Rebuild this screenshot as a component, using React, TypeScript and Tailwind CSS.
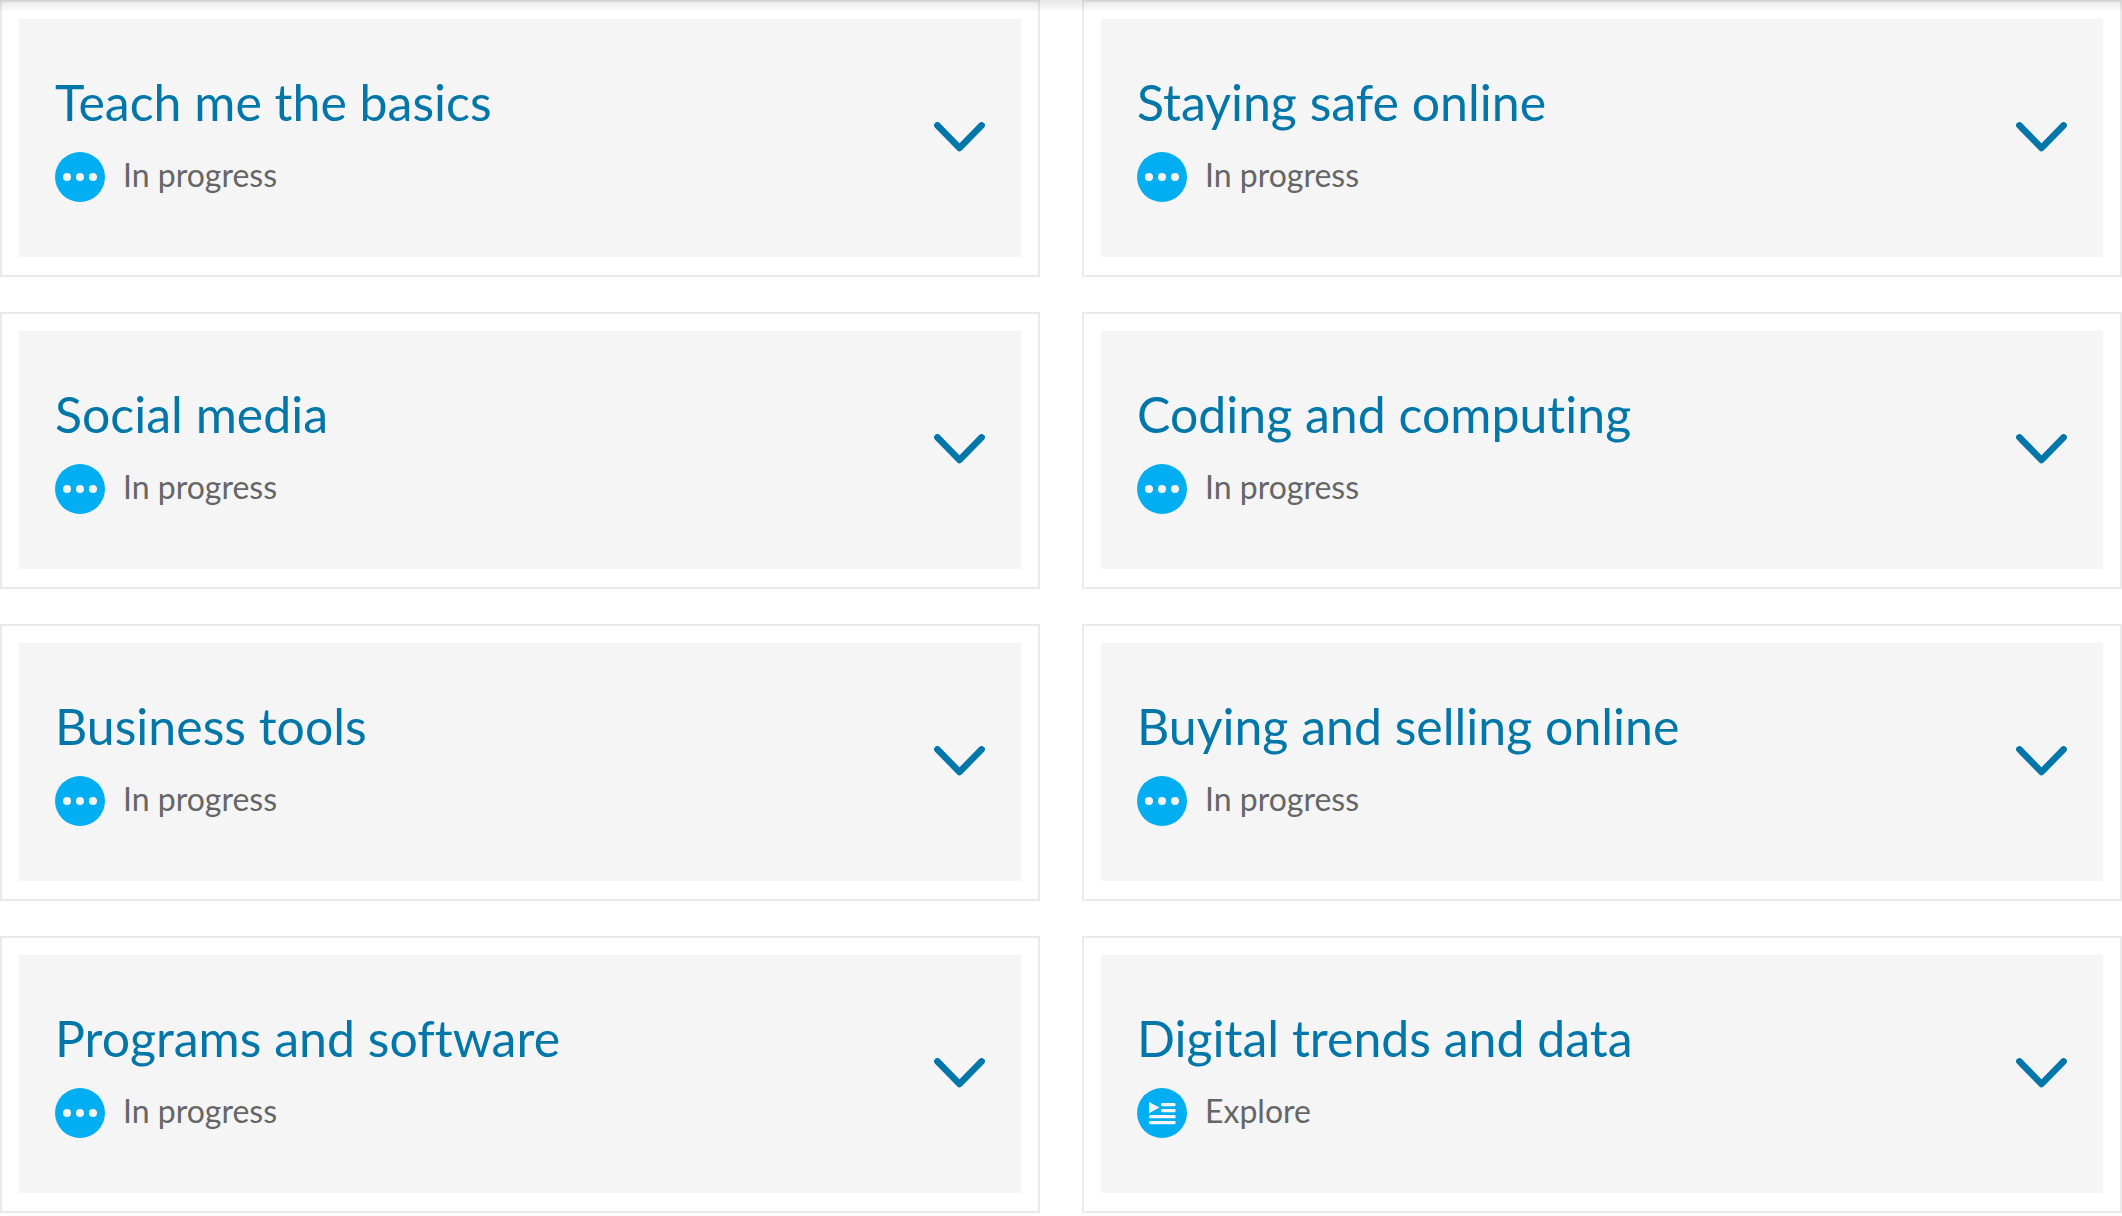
type Status = "In progress" | "Explore";

const topics: { title: string; status: Status }[] = [
  { title: "Teach me the basics", status: "In progress" },
  { title: "Staying safe online", status: "In progress" },
  { title: "Social media", status: "In progress" },
  { title: "Coding and computing", status: "In progress" },
  { title: "Business tools", status: "In progress" },
  { title: "Buying and selling online", status: "In progress" },
  { title: "Programs and software", status: "In progress" },
  { title: "Digital trends and data", status: "Explore" },
];

function StatusIcon({ status }: { status: Status }) {
  return (
    <svg viewBox="0 0 50 50" className="size-[50px] shrink-0" aria-hidden="true">
      <circle cx="25" cy="25" r="25" fill="#02aef2" />
      {status === "In progress" ? (
        <g fill="#f5f5f5">
          <circle cx="12" cy="25" r="4" />
          <circle cx="25" cy="25" r="4" />
          <circle cx="38" cy="25" r="4" />
        </g>
      ) : (
        <g fill="#f5f5f5">
          <path d="M12 14 L22.5 19.6 L12 25.2 Z" />
          <rect x="24" y="15" width="14.6" height="3.2" rx="1.2" />
          <rect x="24" y="21" width="14.6" height="3.2" rx="1.2" />
          <rect x="12" y="27" width="26.6" height="3.2" rx="1.2" />
          <rect x="12" y="33" width="26.6" height="3.2" rx="1.2" />
        </g>
      )}
    </svg>
  );
}

function Chevron() {
  return (
    <svg viewBox="0 0 51 30" className="h-[30px] w-[51px] shrink-0" fill="none" aria-hidden="true">
      <path
        d="M3.4 3.4 L25.5 26 L47.6 3.4"
        stroke="#0076a9"
        strokeWidth="6.6"
        strokeLinecap="round"
        strokeLinejoin="round"
      />
    </svg>
  );
}

function TopicCard({ title, status }: { title: string; status: Status }) {
  return (
    <li className="border-2 border-[#eaeaea] bg-white px-[17px] pt-[17px] pb-[18px]">
      <button
        type="button"
        aria-expanded="false"
        className="flex w-full items-center justify-between gap-6 bg-[#f5f5f5] px-9 pt-[53px] pb-[55px] text-left"
      >
        <span className="flex flex-col gap-5">
          <span className="text-[50px] leading-[60px] text-[#0076a9]">{title}</span>
          <span className="flex items-start gap-[18px]">
            <StatusIcon status={status} />
            <span className="text-[32px] leading-[46px] text-[#666666]">{status}</span>
          </span>
        </span>
        <Chevron />
      </button>
    </li>
  );
}

export default function App() {
  return (
    <main className="relative bg-white font-['Lato',sans-serif] [font-variant-ligatures:no-common-ligatures]">
      <ul className="grid grid-cols-1 gap-x-[42px] gap-y-[35px] md:grid-cols-2">
        {topics.map((topic) => (
          <TopicCard key={topic.title} {...topic} />
        ))}
      </ul>
      <div className="pointer-events-none absolute inset-x-0 top-0 h-3 bg-linear-to-b from-black/10 to-transparent" />
    </main>
  );
}
